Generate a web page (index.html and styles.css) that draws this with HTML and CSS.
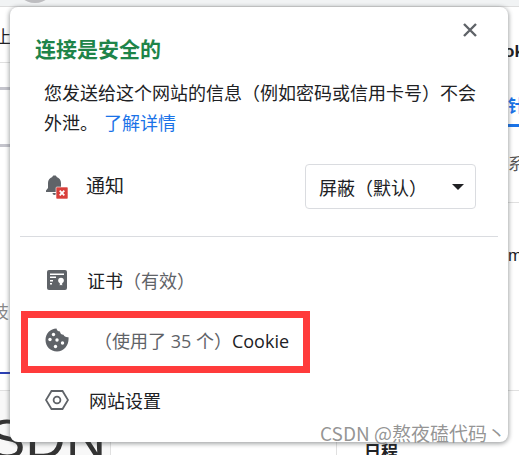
FILE: index.html
```html
<!DOCTYPE html>
<html lang="zh-CN">
<head>
  <meta charset="UTF-8" />
  <title>连接是安全的</title>
  <link rel="stylesheet" href="styles.css">
</head>
<body>

  <div class="backdrop">
    <div class="topbar"><div class="avatar"></div></div>
    <span class="bit bit-stop">止</span>
    <div class="rule rule-a"></div>
    <div class="rule rule-b"></div>
    <div class="rule rule-c"></div>
    <span class="bit bit-tech">技</span>
    <div class="rule rule-link"></div>
    <div class="logo-panel"></div>
    <span class="bit bit-logo">SDN</span>
    <div class="rule rule-left"></div>
    <div class="rule rule-mid"></div>
    <span class="bit bit-ok">ok</span>
    <span class="bit bit-blue">针</span>
    <div class="rule rule-blue"></div>
    <span class="bit bit-sys">系统</span>
    <div class="rule rule-right"></div>
    <span class="bit bit-m">m</span>
    <div class="rule rule-right2"></div>
    <div class="rule rule-right3"></div>
    <span class="bit bit-date">日程</span>
  </div>

  <div class="popup">
    <button class="close" aria-label="关闭">
      <svg width="14" height="14" viewBox="0 0 14 14"><path d="M1 1l12 12M13 1L1 13" stroke="#5f6368" stroke-width="2.4" fill="none"/></svg>
    </button>

    <h1 class="title">连接是安全的</h1>
    <p class="desc">您发送给这个网站的信息（例如密码或信用卡号）不会外泄。 <a class="more" href="#">了解详情</a></p>

    <div class="permission">
      <svg class="bell" width="24" height="26" viewBox="0 0 24 26">
        <path d="M11 2.5c.9 0 1.6.6 1.7 1.5 2.7.8 4.3 3.2 4.3 6v5l2 2.500V19H2v-1.500L4 15v-5c0-2.800 1.600-5.200 4.300-6 .1-.9.8-1.500 1.700-1.500z" fill="#5f6368"/>
        <path d="M8.500 20h4a2 2 0 0 1-4 0z" fill="#5f6368"/>
        <rect x="12" y="14" width="12" height="12" rx="1" fill="#d93f3b" stroke="#fff" stroke-width=".6"/>
        <path d="M15.700 17.700l4.600 4.600M20.300 17.700l-4.600 4.600" stroke="#fff" stroke-width="1.800"/>
      </svg>
      <span class="permission-name">通知</span>
      <div class="select">
        <span>屏蔽（默认）</span>
        <i class="caret"></i>
      </div>
    </div>

    <div class="divider"></div>

    <ul class="menu">
      <li class="menu-item">
        <svg width="20" height="20" viewBox="0 0 20 20">
          <rect width="20" height="20" rx="2" fill="#5f6368"/>
          <path d="M3 3.500h14v1.500H3zM3 6.500h6v1.500H3zM3 10h3v1.500H3zM3 13h2v1.500H3z" fill="#fff"/>
          <circle cx="14" cy="10.500" r="2.800" fill="#fff"/>
          <path d="M12.800 12h2.400v3.500l-1.200-.8-1.200.8z" fill="#fff"/>
        </svg>
        <span>证书<em>（有效）</em></span>
      </li>
      <li class="menu-item cookie">
        <svg width="24" height="24" viewBox="0 0 24 24">
          <path d="M11.500.5c.3 2 1.500 3 3.500 3 .1 2 1.500 3.300 3.500 3.300.6 1.600 2.300 2.600 5 2.400.8 7.600-4.300 14.300-11.500 14.300C5.500 23.500.5 18.500.5 12S5.500.5 11.500.5z" fill="#5f6368"/>
          <g fill="#fff">
            <circle cx="8.500" cy="6.500" r="1.700"/>
            <circle cx="5" cy="11.500" r="1.700"/>
            <circle cx="12" cy="12" r="1.700"/>
            <circle cx="17.500" cy="15" r="1.700"/>
            <circle cx="10.500" cy="18.500" r="1.700"/>
          </g>
        </svg>
        <span class="cookie-text"><em>（使用了 35 个）</em>Cookie</span>
      </li>
      <li class="menu-item">
        <svg width="24" height="20" viewBox="0 0 24 20">
          <path d="M6.500 1h11l5.500 9-5.500 9h-11L1 10z" fill="none" stroke="#5f6368" stroke-width="1.800"/>
          <circle cx="12" cy="10" r="3.400" fill="none" stroke="#5f6368" stroke-width="1.800"/>
        </svg>
        <span>网站设置</span>
      </li>
    </ul>
  </div>

  <div class="watermark">CSDN @熬夜磕代码丶</div>

</body>
</html>
```

FILE: styles.css
```css
html,
body {
  margin: 0;
  padding: 0;
}

body {
  position: relative;
  width: 519px;
  height: 455px;
  overflow: hidden;
  background-color: #fff;
  font-family: "Open Sans", "Noto Sans CJK SC", sans-serif;
  color: #202124;
}

/* page behind the popup */
.backdrop {
  position: absolute;
  inset: 0;
  overflow: hidden;
}

.topbar {
  height: 6px;
  background-color: #f1f3f4;
  border-bottom: 1px solid #dcdcdc;
  overflow: hidden;
}

.avatar {
  width: 40px;
  height: 40px;
  margin: -37px 0 0 15px;
  border-radius: 50%;
  background-color: #bdbdc0;
}

.bit {
  position: absolute;
  font-family: "Noto Sans CJK SC", sans-serif;
  font-size: 17px;
  line-height: 20px;
  white-space: nowrap;
}

.logo-panel {
  position: absolute;
  left: 0;
  top: 390px;
  width: 110px;
  height: 65px;
  background-color: #f8f8f8;
}

.bit-stop { left: -6px; top: 26px; }
.bit-tech { left: -8px; top: 301px; color: #888; }
.bit-logo {
  left: -12px;
  top: 409px;
  font-family: "Liberation Sans", sans-serif;
  font-size: 56px;
  line-height: 60px;
  color: #333;
}
.bit-ok {
  left: 504px;
  top: 42px;
  font-family: "Liberation Sans", sans-serif;
  font-weight: bold;
}
.bit-blue { left: 508px; top: 95px; color: #1a73e8; font-weight: bold; }
.bit-sys { left: 508px; top: 153px; color: #555; }
.bit-m { left: 508px; top: 246px; font-family: "Liberation Sans", sans-serif; }
.bit-date { left: 364px; top: 441px; font-weight: bold; }

.rule {
  position: absolute;
  background-color: #e0e0e0;
}

.rule-a { left: 0; top: 62px; width: 10px; height: 1px; }
.rule-b { left: 0; top: 87px; width: 10px; height: 3px; background-color: #c4c4cc; }
.rule-c { left: 0; top: 144px; width: 10px; height: 3px; background-color: #c4c4cc; }
.rule-link { left: 0; top: 372px; width: 10px; height: 2px; background-color: #2b3fb5; }
.rule-left { left: 0; top: 390px; width: 110px; height: 1px; }
.rule-mid { left: 110px; top: 442px; width: 1px; height: 13px; }
.rule-blue { left: 508px; top: 124px; width: 11px; height: 3px; background-color: #1a73e8; }
.rule-right { left: 508px; top: 202px; width: 11px; height: 1px; }
.rule-right2 { left: 336px; top: 390px; width: 183px; height: 1px; }
.rule-right3 { left: 336px; top: 442px; width: 1px; height: 13px; }

/* popup */
.popup {
  position: absolute;
  left: 10px;
  top: 7px;
  box-sizing: border-box;
  width: 498px;
  height: 435px;
  padding: 26px 10px 0;
  background-color: #fff;
  border-radius: 8px;
  box-shadow: 0 1px 4px 1px rgba(60, 64, 67, 0.45);
}

.close {
  position: absolute;
  right: 31px;
  top: 16px;
  display: flex;
  padding: 0;
  border: none;
  background: none;
}

.title {
  margin: 0 0 0 15px;
  font-family: "Noto Sans CJK SC", sans-serif;
  font-size: 21px;
  line-height: 30px;
  font-weight: bold;
  color: #1e8449;
}

.desc {
  margin: 14px 22px 0 24px;
  font-family: "Noto Sans CJK SC", sans-serif;
  font-size: 18px;
  line-height: 30px;
  color: #202124;
}

.more {
  margin-left: 2px;
  color: #1a73e8;
  text-decoration: none;
}

.permission {
  display: flex;
  align-items: center;
  height: 45px;
  margin: 27px 22px 0 0;
  padding-left: 24px;
}

.bell {
  flex: none;
  margin-top: -1px;
}

.permission-name {
  margin: -4px 0 0 18px;
  font-family: "Noto Sans CJK SC", sans-serif;
  font-size: 19px;
}

.select {
  display: flex;
  align-items: center;
  justify-content: space-between;
  box-sizing: border-box;
  width: 171px;
  height: 45px;
  margin-left: auto;
  padding: 0 11px 0 13px;
  border: 1px solid #dadce0;
  border-radius: 4px;
  font-family: "Noto Sans CJK SC", sans-serif;
  font-size: 18px;
}

.caret {
  width: 0;
  height: 0;
  border-left: 6px solid transparent;
  border-right: 6px solid transparent;
  border-top: 6px solid #202124;
}

.divider {
  height: 1px;
  margin-top: 27px;
  background-color: #dadce0;
}

.menu {
  margin: 13px 0 0;
  padding: 0;
  list-style: none;
}

.menu-item {
  display: flex;
  align-items: center;
  gap: 20px;
  height: 60px;
  padding-left: 25px;
  font-family: "Noto Sans CJK SC", sans-serif;
  font-size: 18px;
  color: #202124;
}

.menu-item em {
  font-style: normal;
  color: #5f6368;
}

.menu-item:first-child svg {
  margin-left: 2px;
}

.cookie {
  position: relative;
  gap: 25px;
}

/* annotation drawn over the row */
.cookie::after {
  content: "";
  position: absolute;
  left: 1px;
  top: 1px;
  width: 275px;
  height: 48px;
  border: 7px solid #ff3b3b;
}

.cookie-text {
  font-family: "Open Sans", "Noto Sans CJK SC", sans-serif;
}

.watermark {
  position: absolute;
  right: 13px;
  top: 421px;
  font-family: "Noto Sans CJK SC", sans-serif;
  font-size: 19px;
  line-height: 24px;
  color: rgba(130, 130, 130, 0.85);
}
```
